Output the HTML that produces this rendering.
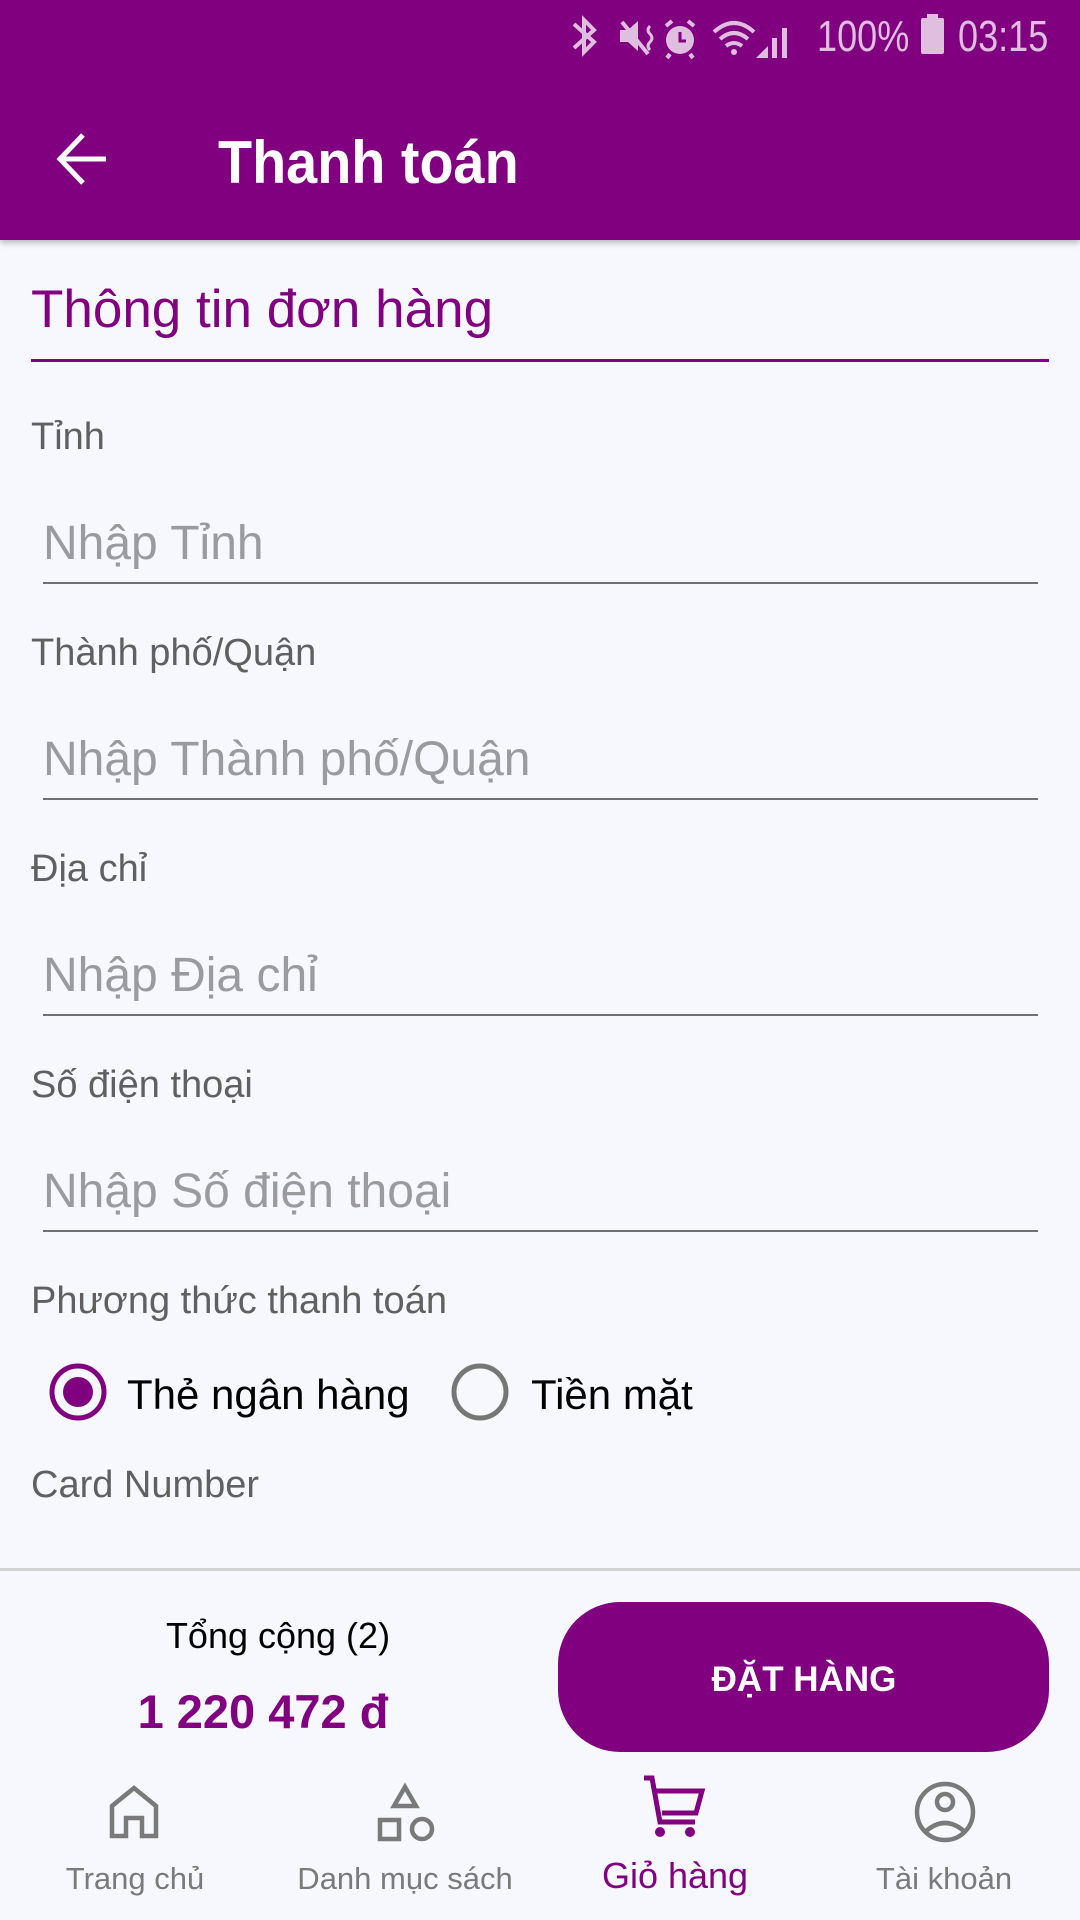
<!DOCTYPE html>
<html><head><meta charset="utf-8"><style>
*{margin:0;padding:0;box-sizing:border-box}
body{width:1080px;height:1920px;background:#f7f8fd;font-family:"Liberation Sans",Arial,sans-serif;position:relative;overflow:hidden}
.t{position:absolute;white-space:nowrap;line-height:1}
.bar{position:absolute;left:0;top:0;width:1080px;height:240px;background:#800080;box-shadow:0 3px 6px rgba(0,0,0,.25)}
.line{position:absolute;left:43px;width:995px;height:2px;background:#707070}
.lbl{font-size:38px;color:#606060;left:31px}
.inp{font-size:48px;color:#9a9a9f;left:43px}
.nav{font-size:31px;color:#7a7a7a;transform:translateX(-50%)}
</style></head><body>
<div class="bar"></div>
<svg style="position:absolute;left:560px;top:14px" width="360" height="46" viewBox="0 0 360 46">
 <g fill="#dfbedf" stroke="#dfbedf">
  <path d="M14 10 L34 28 L24 38 L24 6 L34 16 L14 34" fill="none" stroke-width="4"/>
  <path d="M60 16 h8 l10 -9 v30 l-10 -9 h-8z" stroke="none"/>
  <path d="M62 8 L88 40" stroke-width="4"/>
  <path d="M90 12 q-4 4 0 8 q4 4 0 8 q-4 4 0 8" fill="none" stroke-width="3"/>
  <circle cx="120" cy="26" r="14" stroke="none"/>
  <path d="M106 12 l6 -5 M134 12 l-6 -5 M110 40 l-3 4 M130 40 l3 4" stroke-width="4"/>
  <path d="M120 18 v9 h6" stroke="#800080" stroke-width="3" fill="none"/>
  <path d="M154 18 q20 -18 40 0 M160 25 q14 -12 28 0 M166 32 q8 -6 16 0" fill="none" stroke-width="4"/>
  <circle cx="174" cy="38" r="3" stroke="none"/>
  <path d="M196 44 l12 0 l0 -12z M212 44 h5 v-20 h-5z M222 44 h5 v-30 h-5z" stroke="none"/>
 </g>
</svg>
<div class="t" style="left:817px;top:15px;font-size:44px;color:#dfbedf;transform:scaleX(0.82);transform-origin:left">100%</div>
<div style="position:absolute;left:921px;top:18px;width:23px;height:36px;background:#dfbedf;border-radius:2px"></div>
<div style="position:absolute;left:927px;top:14px;width:11px;height:5px;background:#dfbedf"></div>
<div class="t" style="left:958px;top:15px;font-size:44px;color:#dfbedf;transform:scaleX(0.82);transform-origin:left">03:15</div>
<svg style="position:absolute;left:56px;top:132px" width="52" height="54" viewBox="0 0 52 54"><path d="M50 27 H4 M27 3 L4 27 L27 51" fill="none" stroke="#fff" stroke-width="5"/></svg>
<div class="t" style="left:218px;top:133px;font-size:60px;font-weight:bold;color:#fff;transform:scaleX(0.93);transform-origin:left">Thanh toán</div>
<div class="t" style="left:31px;top:283px;font-size:53px;color:#800080">Thông tin đơn hàng</div>
<div style="position:absolute;left:31px;top:359px;width:1018px;height:3px;background:#800080"></div>

<div class="t lbl" style="top:418px">Tỉnh</div>
<div class="t inp" style="top:520px">Nhập Tỉnh</div>
<div class="line" style="top:582px"></div>
<div class="t lbl" style="top:634px">Thành phố/Quận</div>
<div class="t inp" style="top:736px">Nhập Thành phố/Quận</div>
<div class="line" style="top:798px"></div>
<div class="t lbl" style="top:850px">Địa chỉ</div>
<div class="t inp" style="top:952px">Nhập Địa chỉ</div>
<div class="line" style="top:1014px"></div>
<div class="t lbl" style="top:1066px">Số điện thoại</div>
<div class="t inp" style="top:1168px">Nhập Số điện thoại</div>
<div class="line" style="top:1230px"></div>
<div class="t lbl" style="top:1282px">Phương thức thanh toán</div>

<svg style="position:absolute;left:0;top:1350px" width="600" height="90" viewBox="0 1350 600 90">
 <circle cx="78" cy="1392" r="26" fill="none" stroke="#800080" stroke-width="5"/>
 <circle cx="78" cy="1392" r="15" fill="#800080"/>
 <circle cx="480" cy="1392" r="26" fill="none" stroke="#767676" stroke-width="5"/>
</svg>
<div class="t" style="left:127px;top:1374px;font-size:42px;color:#000">Thẻ ngân hàng</div>
<div class="t" style="left:531px;top:1374px;font-size:42px;color:#000">Tiền mặt</div>
<div class="t lbl" style="top:1466px">Card Number</div>

<div style="position:absolute;left:0;top:1568px;width:1080px;height:3px;background:#d2d2d2"></div>
<div class="t" style="left:278px;top:1618px;font-size:36px;color:#000;transform:translateX(-50%)">Tổng cộng (2)</div>
<div class="t" style="left:263px;top:1688px;font-size:47px;font-weight:bold;color:#800080;transform:translateX(-50%)">1 220 472 đ</div>
<div style="position:absolute;left:558px;top:1602px;width:491px;height:150px;background:#800080;border-radius:62px"></div>
<div class="t" style="left:804px;top:1662px;font-size:35px;font-weight:bold;color:#fff;transform:translateX(-50%)">ĐẶT HÀNG</div>

<svg style="position:absolute;left:0;top:1770px" width="1080" height="80" viewBox="0 1770 1080 80">
 <g fill="none" stroke="#7a7a7a" stroke-width="4.5">
  <path d="M112 1836 V1806 L134 1788 L156 1806 V1836 H142 V1818 H126 V1836 Z"/>
  <path d="M405 1787 L416 1806 H394 Z"/>
  <rect x="380" y="1820" width="19" height="19"/>
  <circle cx="422" cy="1829" r="10"/>
  <circle cx="945" cy="1812" r="28"/>
  <circle cx="945" cy="1802" r="8"/>
  <path d="M925 1832 q20 -18 40 0"/>
 </g>
 <g fill="none" stroke="#800080" stroke-width="5">
  <path d="M644 1778 H652 L660 1822 H695 M655 1791 H702 L696 1813 H662"/>
 </g>
 <circle cx="660" cy="1832" r="5" fill="#800080"/>
 <circle cx="690" cy="1832" r="5" fill="#800080"/>
</svg>
<div class="t nav" style="left:135px;top:1863px">Trang chủ</div>
<div class="t nav" style="left:405px;top:1863px">Danh mục sách</div>
<div class="t nav" style="left:675px;top:1858px;font-size:36px;color:#800080">Giỏ hàng</div>
<div class="t nav" style="left:944px;top:1863px">Tài khoản</div>
</body></html>
